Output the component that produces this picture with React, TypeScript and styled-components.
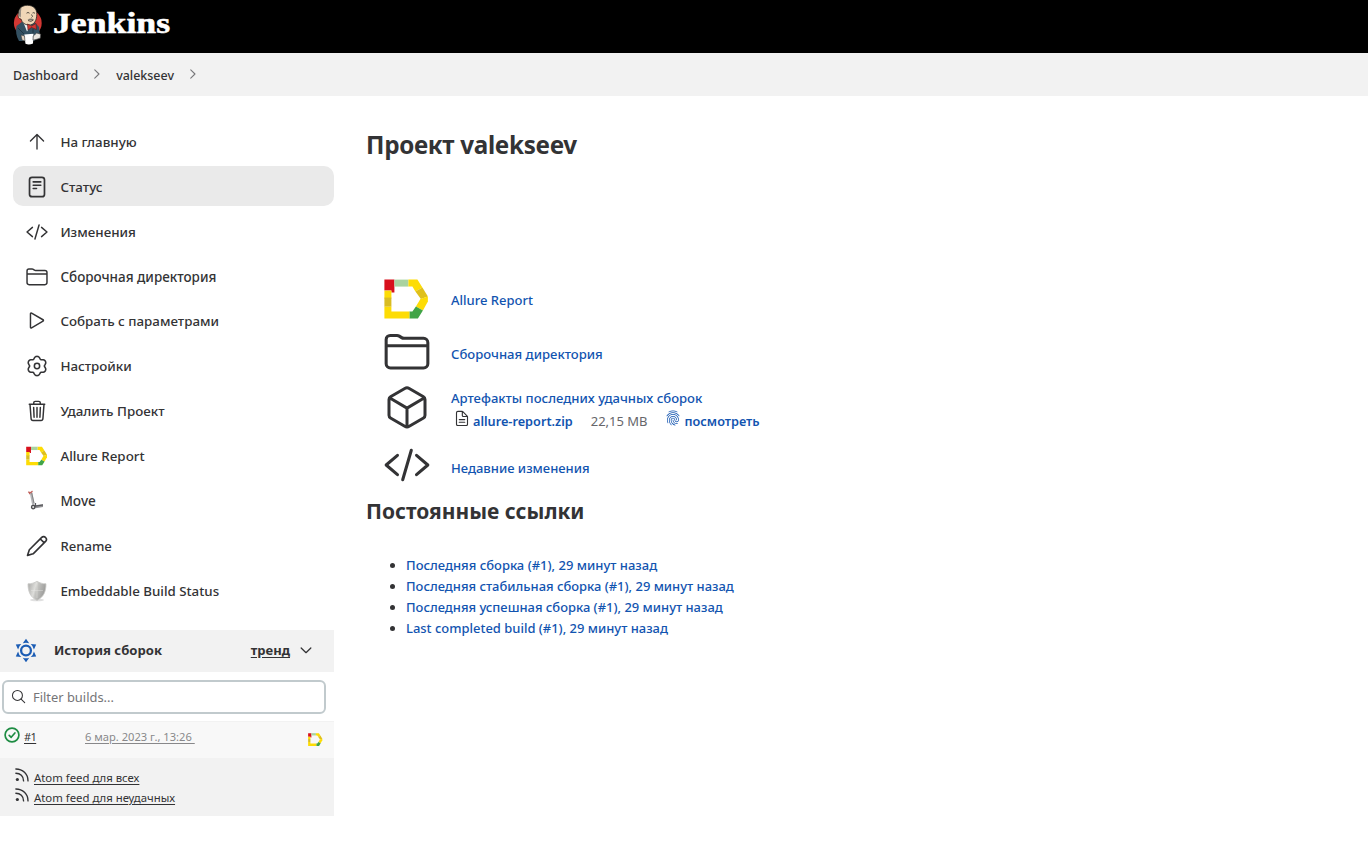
import React from 'react';
import styled, { createGlobalStyle, css } from 'styled-components';
import { IoFingerPrintOutline } from 'react-icons/io5';

const GlobalStyle = createGlobalStyle`
  *, *::before, *::after { box-sizing: border-box; }
  body {
    margin: 0;
    background: #fff;
    color: #333335;
    font-family: "Noto Sans", "Open Sans", sans-serif;
    font-size: 13px;
  }
`;

const Header = styled.header`
  display: flex;
  align-items: flex-start;
  height: 53px;
  padding: 4px 12px 0;
  background: #000;
`;

const Brand = styled.a`
  display: flex;
  gap: 9px;
  color: #fff;
`;

const BrandName = styled.span`
  font: bold 30px/38px "Liberation Serif", serif;
  transform: scaleX(1.19);
  transform-origin: left center;
  -webkit-text-stroke: 0.6px #fff;
`;

const Breadcrumbs = styled.nav`
  display: flex;
  align-items: center;
  height: 43px;
  padding: 1px 13px 0;
  background: #f2f2f2;
  font-size: 12.45px;
  font-weight: 500;
`;

const Crumb = styled.span<{ $gap: number }>`
  display: flex;
  align-items: center;
  gap: 13px;
  margin-right: ${p => p.$gap}px;
  svg { margin-top: -3px; color: #77777a; }
`;

const Page = styled.div`
  display: flex;
  align-items: flex-start;
`;

const SidePanel = styled.aside`
  width: 334px;
  padding-top: 25.5px;
`;

const Tasks = styled.ul`
  display: flex;
  flex-direction: column;
  gap: 4.9px;
  margin: 0 0 19.5px;
  padding: 0 0 0 13px;
  list-style: none;
`;

const Task = styled.li<{ $active?: boolean; $size?: number }>`
  display: flex;
  align-items: center;
  gap: 12.4px;
  height: 40px;
  padding: 0.7px 0 0 13px;
  border-radius: 10px;
  font-size: ${p => p.$size ?? 13.36}px;
  font-weight: 500;
  line-height: 18px;
  ${p => p.$active && css`background: #eaeaea;`}
`;

const IconSlot = styled.span<{ $size: number }>`
  display: flex;
  flex: none;
  align-items: center;
  justify-content: center;
  width: ${p => p.$size}px;
  height: ${p => p.$size}px;
`;

const HistoryHeader = styled.div`
  display: flex;
  align-items: center;
  height: 42px;
  padding: 0 22px 1px 14px;
  background: #f2f2f2;
  font-weight: 700;
`;

const HistoryTitle = styled.span`
  flex: 1;
  margin-left: 16px;
  font-size: 13.1px;
`;

const TrendLink = styled.a`
  margin-right: 10px;
  text-decoration: underline;
  text-underline-offset: 2px;
`;

const SearchBox = styled.label`
  display: flex;
  align-items: center;
  gap: 7px;
  width: 324px;
  height: 34px;
  margin: 8px 0 7px 2px;
  padding-left: 7px;
  border: 2px solid #c1cacd;
  border-radius: 6px;
`;

const SearchInput = styled.input`
  flex: 1;
  min-width: 0;
  padding: 0;
  border: 0;
  outline: 0;
  background: none;
  font: 400 12.9px "Noto Sans", sans-serif;
  &::placeholder { color: #757578; opacity: 1; }
`;

const BuildRow = styled.div`
  display: flex;
  height: 37px;
  padding: 5px 11px 0 4px;
  border-top: 1px solid #f2f2f2;
  background: #f8f8f8;
  font-size: 11.15px;
  line-height: 19px;
`;

const BuildNumber = styled.a`
  width: 61px;
  margin-left: 4px;
  font-size: 11px;
  letter-spacing: -0.6px;
  text-decoration: underline;
  text-underline-offset: 2px;
`;

const BuildDate = styled.a`
  flex: 1;
  color: #88888a;
  white-space: pre;
  text-decoration: underline;
  text-underline-offset: 2px;
`;

const BadgeSlot = styled.span`
  padding-top: 5px;
  line-height: 0;
`;

const Feeds = styled.div`
  display: flex;
  flex-direction: column;
  height: 58px;
  padding: 10px 15px 0;
  background: #f2f2f2;
  font-size: 11.35px;
  line-height: 20px;
`;

const FeedLink = styled.a`
  display: flex;
  gap: 5px;
  height: 20px;
  span { text-decoration: underline; text-underline-offset: 2px; }
`;

const Main = styled.main`
  padding: 29px 0 0 32px;
`;

const Title = styled.h1`
  margin: 0 0 108px;
  font-size: 24.2px;
  font-weight: 700;
  line-height: 40px;
  letter-spacing: -0.3px;
`;

const Summary = styled.div`
  display: flex;
  flex-direction: column;
  margin-left: 17px;
`;

const SummaryRow = styled.div<{ $height: number }>`
  display: flex;
  align-items: center;
  gap: 20px;
  height: ${p => p.$height}px;
`;

const SummaryText = styled.div<{ $drop?: number }>`
  display: flex;
  flex-direction: column;
  padding-top: ${p => p.$drop ?? 0}px;
  line-height: 23px;
`;

const Link = styled.a<{ $bold?: boolean; $size?: number }>`
  color: #1254b0;
  font-size: ${p => p.$size ?? 13}px;
  font-weight: ${p => (p.$bold ? 600 : 500)};
`;

const Artifact = styled.div`
  display: flex;
  height: 23px;
  padding-left: 3px;
`;

const FileSize = styled.span`
  margin: 0 17px 0 18px;
  color: #66666a;
`;

const ArtifactLink = styled(Link)<{ $gap: number }>`
  margin-left: ${p => p.$gap}px;
`;

const Subtitle = styled.h2`
  margin: 1px 0 27px;
  font-size: 20.95px;
  font-weight: 700;
  line-height: 34px;
`;

const Permalinks = styled.ul`
  margin: 0;
  padding-left: 40px;
  line-height: 21px;
`;

const Stroke = ({ size, w = 32, children }: { size: number; w?: number; children: React.ReactNode }) => (
  <svg width={size} height={size} viewBox="0 0 512 512" fill="none" stroke="currentColor"
    strokeWidth={w} strokeLinecap="round" strokeLinejoin="round">{children}</svg>
);

const ArrowUp = () => <Stroke size={22}><path d="M104 232L256 80l152 152M256 92v326" /></Stroke>;

const StatusIcon = () => (
  <Stroke size={22} w={40}>
    <rect x="82" y="30" width="348" height="452" rx="58" />
    <path d="M168 138h176M168 214h176M168 290h76" strokeWidth="38" />
  </Stroke>
);

const CodeIcon = ({ size, w }: { size: number; w: number }) => (
  <Stroke size={size} w={w}>
    <path d="M150 364L24 256l126-108M362 364l126-108-126-108M304 92l-96 328" />
  </Stroke>
);

const FolderIcon = ({ size, w }: { size: number; w: number }) => (
  <Stroke size={size} w={w}>
    <path d="M440 434H72a48 48 0 01-48-48V116a44 44 0 0144-44h76a48 48 0 0126 7l26 17a48 48 0 0026 8H440a48 48 0 0148 48v234a48 48 0 01-48 48zM26 186h460" />
  </Stroke>
);

const PlayIcon = () => (
  <Stroke size={22} w={34}>
    <path d="M104 88v312c0 14 12 23 26 15l266-154c14-8 14-26 0-34L130 73c-14-8-26 1-26 15z" />
  </Stroke>
);

const gearPath = Array.from({ length: 97 }, (_, i) => {
  const a = (i / 96) * Math.PI * 2;
  const r = 202 + 26 * Math.cos(6 * a) - 4 * Math.cos(12 * a);
  return `${i ? 'L' : 'M'}${(256 + r * Math.sin(a)).toFixed(1)} ${(256 - r * Math.cos(a)).toFixed(1)}`;
}).join('');

const GearIcon = () => (
  <Stroke size={22} w={36}><path d={`${gearPath}Z`} /><circle cx="256" cy="256" r="62" /></Stroke>
);

const TrashIcon = () => (
  <Stroke size={22} w={34}>
    <path d="M94 110l24 320c2 28 20 46 44 46h188c24 0 42-18 44-46l24-320" />
    <path d="M76 100h360M180 94V66a34 34 0 0134-34h84a34 34 0 0134 34v28M256 172v228M178 172l10 228M334 172l-10 228" />
  </Stroke>
);

const PencilIcon = () => (
  <Stroke size={22} w={38}>
    <path d="M366 56L78 344 36 474l130-36 290-288c58-60-32-152-90-94zM334 92l86 86" />
  </Stroke>
);

const CubeIcon = () => (
  <Stroke size={48}>
    <path d="M448 334V164a32 32 0 00-16-28L280 47.500a48 48 0 00-48 0L80 136a32 32 0 00-16 28v170a32 32 0 0016 28l152 88.500a48 48 0 0048 0L432 362a32 32 0 0016-28zM69 147l187 110 187-110M256 457V257" />
  </Stroke>
);

const DocumentIcon = () => (
  <Stroke size={16} w={36}>
    <path d="M432 216v240a44 44 0 01-44 44H124a44 44 0 01-44-44V88a44 44 0 0144-44h136a32 32 0 0123 9l140 140a32 32 0 019 23zM266 56v120a32 32 0 0032 32h120M168 306h176M168 392h176" />
  </Stroke>
);

const SearchIcon = () => (
  <Stroke size={15} w={36}><circle cx="220" cy="220" r="170" /><path d="M344 344l124 124" /></Stroke>
);

const Chevron = ({ down }: { down?: boolean }) => down
  ? <Stroke size={12} w={54}><path d="M50 170l206 200 206-200" /></Stroke>
  : <Stroke size={12} w={46}><path d="M160 76l180 180-180 180" /></Stroke>;

const FeedIcon = () => (
  <Stroke size={14} w={50}>
    <path d="M32 36c248 0 444 180 444 436M32 190c160 0 282 116 282 282" />
    <circle cx="86" cy="420" r="58" fill="currentColor" stroke="none" />
  </Stroke>
);

const AllureIcon = ({ size }: { size: number }) => (
  <svg width={size} height={size} viewBox="0.6 -0.6 46 46">
    <path d="M1 3h10v13H8v-2H1z" fill="#d8101c" />
    <path d="M11 3h14v7H11z" fill="#a9d3a0" />
    <path d="M25 3h9l5 8-7 4-3-5h-4z" fill="#fddc05" />
    <path d="M39 11l5.500 9-7 2.500-5.500-7.500z" fill="#dfc01b" />
    <path d="M44.500 20v5l-5 9-7-4 4.500-7.500z" fill="#fddc05" />
    <path d="M39.500 34l-5 8H26v-7h3l3.500-5z" fill="#41a447" />
    <path d="M1 30h7v5h18v7H1z" fill="#fddc05" />
    <path d="M1 14h7v8H1z" fill="#fddc05" />
    <path d="M1 21h7v9H1z" fill="#d9bc22" />
  </svg>
);

const ScooterIcon = () => (
  <svg width="22" height="22" viewBox="0 0 22 22" fill="none">
    <path d="M5 2.500L7.500 15" stroke="#b5b5b8" strokeWidth="2.600" />
    <path d="M5.700 3L8 13" stroke="#777" strokeWidth=".8" />
    <path d="M2 2l3 .5L6.500 1M3 2.200l1 2" stroke="#c0605a" strokeWidth="1.200" />
    <path d="M8 15.500l9-1.500v3L8 18.500z" fill="#919194" />
    <path d="M9.500 13v3l7.500-1" stroke="#55555a" strokeWidth="1.200" />
    <circle cx="7.200" cy="17.100" r="1.700" stroke="#4b4b4e" strokeWidth="1.300" fill="#ddd" />
  </svg>
);

const ShieldIcon = () => (
  <svg width="22" height="22" viewBox="0 0 22 22">
    <defs>
      <linearGradient id="shield" x1="0" x2="1" y1="0" y2=".3">
        <stop offset="0" stopColor="#a5a5a3" /><stop offset=".45" stopColor="#dededb" />
        <stop offset=".55" stopColor="#c6c6c3" /><stop offset="1" stopColor="#9d9d9b" />
      </linearGradient>
    </defs>
    <ellipse cx="11" cy="20" rx="7" ry="1.300" fill="#e0e0e0" />
    <path d="M11 1.200c2.500 1.700 5.500 2.600 9 2.600 0 8-2.500 13.500-9 16.600C4.500 17.300 2 11.800 2 3.800c3.500 0 6.500-.9 9-2.600z" fill="url(#shield)" stroke="#c9c9c7" strokeWidth=".8" />
    <path d="M11 3v15M5 10.500h12" stroke="#f0f0ee" strokeWidth=".5" opacity=".7" />
  </svg>
);

const BuildsIcon = () => (
  <svg width="24" height="24" viewBox="0 0 24 24" fill="#1c5db5">
    <circle cx="12" cy="12.500" r="4.900" fill="none" stroke="#1c5db5" strokeWidth="2.300" />
    {[0, 60, 120, 180, 240, 300].map(a => (
      <path key={a} d="M12 .7l3.200 4.500q-3.200-1.100-6.400 0z" transform={`rotate(${a} 12 12.500)`} />
    ))}
  </svg>
);

const SuccessIcon = () => (
  <svg width="16" height="16" viewBox="0 0 16 16" fill="none" stroke="#1e8c43" strokeLinecap="round" strokeLinejoin="round">
    <circle cx="8" cy="8" r="6.900" strokeWidth="1.700" />
    <path d="M5.200 8.300l2 2 3.700-4.300" strokeWidth="1.700" />
  </svg>
);

const JenkinsLogo = () => (
  <svg width="32" height="42" viewBox="0 0 32 42">
    <circle cx="15.800" cy="19" r="13.900" fill="#d33833" />
    <path d="M4.500 22l6-4.500 12 .5 4.500 5 1 9-6 5H7C4 32 3.500 27 4.500 22z" fill="#335061" />
    <path d="M11 17.500l4 10 6-9z" fill="#eef1f2" />
    <path d="M6.500 9C7 3.500 11 1.300 15.500 1.300c6 0 9.500 3.700 9.300 9.200-.2 6.500-2.800 10.500-7.800 10.500-4.500 0-7-2.500-8-6C6.500 15 5.500 12 6.500 9z" fill="#f0d6b7" stroke="#25231f" strokeWidth=".8" />
    <path d="M7 8.500c0-2 .7-3.500 2.300-4.600.2 2-.6 3-.3 5.100l-.2 4.500C7 13 6.300 11 7 8.500z" fill="#938b82" />
    <path d="M14.500 9.200q1.500-1.500 3 0M20.500 9q1.500-1 2.500.4M19.500 10.500q2 2.500 0 3M16 16.500q3 2 5.500-.5" fill="none" stroke="#453f38" strokeWidth=".9" />
    <path d="M15.500 15.600q3.500-2.200 6.500 0l-3 .9z" fill="#7a736c" />
    <path d="M15.500 20l4 2 4.500-2.500.5 6-5-2-3.500 2.500z" fill="#d33833" stroke="#601e1e" strokeWidth=".7" />
    <path d="M6 24l6 6M21 25v6" stroke="#1d2f3b" strokeWidth=".8" />
    <path d="M12.300 30.500l9.200-.8-.5 9.800q-4 1.600-7.500.3z" fill="#fff" />
    <path d="M21.200 32l3.500-3 4 1.200-.5 4-4.200 1.300-3 .7z" fill="#e9e5df" stroke="#444" strokeWidth=".7" />
    <path d="M9 31l3.500 1 .5 5-3-1z" fill="#e3d2c0" stroke="#333" strokeWidth=".5" />
  </svg>
);

const tasks: { label: string; icon: React.ReactNode; active?: boolean; size?: number }[] = [
  { label: 'На главную', icon: <ArrowUp /> },
  { label: 'Статус', icon: <StatusIcon />, active: true },
  { label: 'Изменения', icon: <CodeIcon size={22} w={34} /> },
  { label: 'Сборочная директория', icon: <FolderIcon size={22} w={34} />, size: 13.46 },
  { label: 'Собрать с параметрами', icon: <PlayIcon /> },
  { label: 'Настройки', icon: <GearIcon /> },
  { label: 'Удалить Проект', icon: <TrashIcon /> },
  { label: 'Allure Report', icon: <AllureIcon size={22} /> },
  { label: 'Move', icon: <ScooterIcon />, size: 13.6 },
  { label: 'Rename', icon: <PencilIcon />, size: 13.1 },
  { label: 'Embeddable Build Status', icon: <ShieldIcon />, size: 13.3 },
];

const permalinks = [
  'Последняя сборка (#1), 29 минут назад',
  'Последняя стабильная сборка (#1), 29 минут назад',
  'Последняя успешная сборка (#1), 29 минут назад',
  'Last completed build (#1), 29 минут назад',
];

export default function App() {
  return (
    <>
      <GlobalStyle />
      <Header>
        <Brand><JenkinsLogo /><BrandName>Jenkins</BrandName></Brand>
      </Header>
      <Breadcrumbs>
        <Crumb $gap={13}>Dashboard <Chevron /></Crumb>
        <Crumb $gap={0}>valekseev <Chevron /></Crumb>
      </Breadcrumbs>
      <Page>
        <SidePanel>
          <Tasks>
            {tasks.map(t => (
              <Task key={t.label} $active={t.active} $size={t.size}>
                <IconSlot $size={22}>{t.icon}</IconSlot>{t.label}
              </Task>
            ))}
          </Tasks>
          <HistoryHeader>
            <BuildsIcon />
            <HistoryTitle>История сборок</HistoryTitle>
            <TrendLink>тренд</TrendLink>
            <Chevron down />
          </HistoryHeader>
          <SearchBox><SearchIcon /><SearchInput placeholder="Filter builds..." /></SearchBox>
          <BuildRow>
            <SuccessIcon />
            <BuildNumber>#1</BuildNumber>
            <BuildDate>{'6 мар. 2023 г., 13:26 '}</BuildDate>
            <BadgeSlot><AllureIcon size={15} /></BadgeSlot>
          </BuildRow>
          <Feeds>
            <FeedLink><FeedIcon /><span>Atom feed для всех</span></FeedLink>
            <FeedLink><FeedIcon /><span>Atom feed для неудачных</span></FeedLink>
          </Feeds>
        </SidePanel>
        <Main>
          <Title>Проект valekseev</Title>
          <Summary>
            <SummaryRow $height={52}>
              <IconSlot $size={48}><AllureIcon size={46} /></IconSlot>
              <SummaryText $drop={2}><Link>Allure Report</Link></SummaryText>
            </SummaryRow>
            <SummaryRow $height={54}>
              <IconSlot $size={48}><FolderIcon size={46} w={34} /></IconSlot>
              <SummaryText $drop={4}><Link $size={13.1}>Сборочная директория</Link></SummaryText>
            </SummaryRow>
            <SummaryRow $height={58}>
              <IconSlot $size={48}><CubeIcon /></IconSlot>
              <SummaryText $drop={3}>
                <Link $size={13.1}>Артефакты последних удачных сборок</Link>
                <Artifact>
                  <DocumentIcon />
                  <ArtifactLink $bold $size={12.7} $gap={3}>allure-report.zip</ArtifactLink>
                  <FileSize>22,15 MB</FileSize>
                  <IoFingerPrintOutline size={16} color="#1254b0" />
                  <ArtifactLink $bold $size={12.7} $gap={4}>посмотреть</ArtifactLink>
                </Artifact>
              </SummaryText>
            </SummaryRow>
            <SummaryRow $height={56}>
              <IconSlot $size={48}><CodeIcon size={46} w={34} /></IconSlot>
              <SummaryText $drop={6}><Link>Недавние изменения</Link></SummaryText>
            </SummaryRow>
          </Summary>
          <Subtitle>Постоянные ссылки</Subtitle>
          <Permalinks>
            {permalinks.map((p, i) => <li key={p}><Link $size={i ? 12.96 : 13}>{p}</Link></li>)}
          </Permalinks>
        </Main>
      </Page>
    </>
  );
}
